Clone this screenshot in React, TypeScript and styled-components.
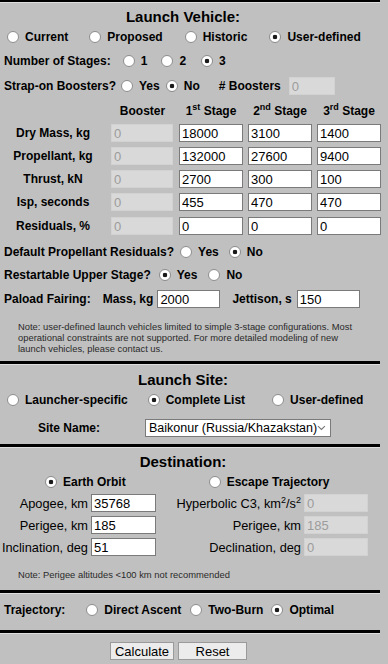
import React from 'react';
import styled, { createGlobalStyle } from 'styled-components';

const GlobalStyle = createGlobalStyle`
  html, body {
    margin: 0;
    padding: 0;
    background: #c0c0c0;
  }
  body {
    font-family: "Liberation Sans", Arial, sans-serif;
    color: #000;
  }
`;

const Panel = styled.div`
  width: 380px;
  display: flex;
  flex-direction: column;
`;

const Rule = styled.div<{ $h?: number; $top?: number }>`
  height: ${p => p.$h ?? 3}px;
  margin-top: ${p => p.$top ?? 0}px;
  background: #000;
  border-bottom: 1px solid #dedede;
`;

const Row = styled.div<{ $top?: number; $h?: number; $pl?: number }>`
  display: flex;
  align-items: center;
  height: ${p => p.$h ?? 20}px;
  margin-top: ${p => p.$top ?? 0}px;
  padding-left: ${p => p.$pl ?? 4}px;
  font-size: 12px;
  font-weight: bold;
  white-space: nowrap;
`;

const Title = styled.div<{ $top?: number }>`
  height: 20px;
  line-height: 20px;
  margin-top: ${p => p.$top ?? 0}px;
  padding-right: 14px;
  text-align: center;
  font-size: 15px;
  font-weight: bold;
`;

const Option = styled.label<{ $ml?: number }>`
  display: inline-flex;
  align-items: center;
  gap: 6px;
  margin-left: ${p => p.$ml ?? 0}px;
`;

const RadioDot = styled.input.attrs({ type: 'radio' })`
  appearance: none;
  -webkit-appearance: none;
  margin: 0;
  width: 12px;
  height: 12px;
  box-sizing: border-box;
  border-radius: 50%;
  border: 1px solid #8d8d8d;
  background: #fff;
  flex: none;

  &:checked {
    background: radial-gradient(circle, #1a1a1a 0 2px, #fff 2.6px);
  }
`;

const Field = styled.input<{ $w?: number }>`
  box-sizing: border-box;
  width: ${p => p.$w ?? 63}px;
  height: 18px;
  margin: 0;
  padding: 0 2px;
  border: 1px solid #7a7a7a;
  background: #fff;
  color: #000;
  font-family: "Liberation Sans", Arial, sans-serif;
  font-size: 13px;
  font-weight: normal;

  &:disabled {
    background: #d9d9d9;
    border-color: #d2d2d2;
    color: #9c9c9c;
  }
`;

const Text = styled.span<{ $ml?: number; $mr?: number }>`
  margin-left: ${p => p.$ml ?? 0}px;
  margin-right: ${p => p.$mr ?? 0}px;
`;

const StageGrid = styled.div<{ $top?: number }>`
  display: grid;
  grid-template-columns: 106px 63px 64px 64px 64px;
  column-gap: 5px;
  align-items: center;
  height: 20px;
  margin-top: ${p => p.$top ?? 0}px;
  font-size: 12px;
  font-weight: bold;
  text-align: center;

  sup {
    font-size: 9px;
    line-height: 0;
    vertical-align: 5px;
  }
`;

const Note = styled.p<{ $top?: number; $w?: number }>`
  margin: ${p => p.$top ?? 0}px 0 0 18px;
  width: ${p => p.$w ?? 350}px;
  font-size: 9.4px;
  line-height: 11px;
  color: #2a2a2a;
`;

const Select = styled.div`
  box-sizing: border-box;
  display: flex;
  align-items: center;
  justify-content: space-between;
  width: 186px;
  height: 18px;
  margin-left: 45px;
  padding: 0 4px 0 3px;
  border: 1px solid #7a7a7a;
  background: #fff;
  font-size: 12.5px;
  font-weight: normal;
`;

const DestGrid = styled.div<{ $top?: number }>`
  display: grid;
  grid-template-columns: 88px 65px 142px 64px;
  column-gap: 3px;
  align-items: center;
  height: 20px;
  margin-top: ${p => p.$top ?? 0}px;
  font-size: 12.8px;
  white-space: nowrap;
  text-align: right;

  sup {
    font-size: 9px;
    line-height: 0;
    vertical-align: 5px;
  }
`;

const ButtonBar = styled.div`
  display: flex;
  gap: 4px;
  margin: 8px 0 0 110px;
`;

const Button = styled.button<{ $w: number }>`
  box-sizing: border-box;
  width: ${p => p.$w}px;
  height: 18px;
  padding: 0;
  border: 1px solid #9a9a9a;
  background: #ececec;
  font-family: "Liberation Sans", Arial, sans-serif;
  font-size: 13px;
  color: #000;
`;

const Radio = ({ label, on, ml, name }: { label: React.ReactNode; on?: boolean; ml?: number; name: string }) => (
  <Option $ml={ml}>
    <RadioDot name={name} defaultChecked={on} />
    <span>{label}</span>
  </Option>
);

const stages = [
  { label: 'Dry Mass, kg', top: 2, v: ['18000', '3100', '1400'] },
  { label: 'Propellant, kg', top: 3, v: ['132000', '27600', '9400'] },
  { label: 'Thrust, kN', top: 3, v: ['2700', '300', '100'] },
  { label: 'Isp, seconds', top: 3, v: ['455', '470', '470'] },
  { label: 'Residuals, %', top: 4, v: ['0', '0', '0'] },
];

const App = () => {
  return (
    <Panel>
      <GlobalStyle />
      <Rule $h={2} />

      <Title $top={4}>Launch Vehicle:</Title>
      <Row $pl={7}>
        <Radio name="lv" label="Current" />
        <Radio name="lv" label="Proposed" ml={21} />
        <Radio name="lv" label="Historic" ml={22} />
        <Radio name="lv" label="User-defined" ml={22} on />
      </Row>
      <Row $top={4}>
        <Text>Number of Stages:</Text>
        <Radio name="st" label="1" ml={12} />
        <Radio name="st" label="2" ml={14} />
        <Radio name="st" label="3" ml={15} on />
      </Row>
      <Row $top={5}>
        <Text>Strap-on Boosters?</Text>
        <Radio name="sb" label="Yes" ml={5} />
        <Radio name="sb" label="No" ml={6} on />
        <Text $ml={19} $mr={8}>#&nbsp;Boosters</Text>
        <Field $w={46} disabled defaultValue="0" />
      </Row>

      <StageGrid $top={5}>
        <span />
        <span>Booster</span>
        <span>1<sup>st</sup> Stage</span>
        <span>2<sup>nd</sup> Stage</span>
        <span>3<sup>rd</sup> Stage</span>
      </StageGrid>
      {stages.map(s => (
        <StageGrid key={s.label} $top={s.top}>
          <span>{s.label}</span>
          <Field $w={62} disabled defaultValue="0" />
          {s.v.map((x, i) => (
            <Field key={i} $w={64} defaultValue={x} />
          ))}
        </StageGrid>
      ))}

      <Row $top={6}>
        <Text>Default Propellant Residuals?</Text>
        <Radio name="dr" label="Yes" ml={6} />
        <Radio name="dr" label="No" ml={10} on />
      </Row>
      <Row $top={3}>
        <Text>Restartable Upper Stage?</Text>
        <Radio name="ru" label="Yes" ml={8} on />
        <Radio name="ru" label="No" ml={11} />
      </Row>
      <Row $top={4}>
        <Text>Paload Fairing:</Text>
        <Text $ml={12} $mr={4}>Mass, kg</Text>
        <Field defaultValue="2000" />
        <Text $ml={12} $mr={5}>Jettison, s</Text>
        <Field defaultValue="150" />
      </Row>
      <Note $top={12}>
        Note: user-defined launch vehicles limited to simple 3-stage configurations. Most
        operational constraints are not supported. For more detailed modeling of new
        launch vehicles, please contact us.
      </Note>

      <Rule $top={7} />

      <Title $top={5}>Launch Site:</Title>
      <Row $pl={7}>
        <Radio name="ls" label="Launcher-specific" />
        <Radio name="ls" label="Complete List" ml={20} on />
        <Radio name="ls" label="User-defined" ml={27} />
      </Row>
      <Row $top={8}>
        <Text $ml={34}>Site Name:</Text>
        <Select>
          <span>Baikonur (Russia/Khazakstan)</span>
          <svg width="9" height="6" viewBox="0 0 9 6">
            <path d="M1 1l3.5 3.5L8 1" fill="none" stroke="#777" strokeWidth="1.1" />
          </svg>
        </Select>
      </Row>

      <Rule $top={6} />

      <Title $top={4}>Destination:</Title>
      <Row $pl={45}>
        <Radio name="ds" label="Earth Orbit" on />
        <Radio name="ds" label="Escape Trajectory" ml={83} />
      </Row>
      <DestGrid $top={1}>
        <span>Apogee, km</span>
        <Field $w={65} defaultValue="35768" />
        <span>Hyperbolic C3, km<sup>2</sup>/s<sup>2</sup></span>
        <Field $w={64} disabled defaultValue="0" />
      </DestGrid>
      <DestGrid $top={2}>
        <span>Perigee, km</span>
        <Field $w={65} defaultValue="185" />
        <span>Perigee, km</span>
        <Field $w={64} disabled defaultValue="185" />
      </DestGrid>
      <DestGrid $top={2}>
        <span>Inclination, deg</span>
        <Field $w={65} defaultValue="51" />
        <span>Declination, deg</span>
        <Field $w={64} disabled defaultValue="0" />
      </DestGrid>
      <Note $top={12}>Note: Perigee altitudes &lt;100 km not recommended</Note>

      <Rule $top={10} />

      <Row $top={6}>
        <Text>Trajectory:</Text>
        <Radio name="tr" label="Direct Ascent" ml={21} />
        <Radio name="tr" label="Two-Burn" ml={9} />
        <Radio name="tr" label="Optimal" ml={8} on />
      </Row>

      <Rule $top={10} />

      <ButtonBar>
        <Button $w={64}>Calculate</Button>
        <Button $w={69}>Reset</Button>
      </ButtonBar>
    </Panel>
  );
};

export default App;
